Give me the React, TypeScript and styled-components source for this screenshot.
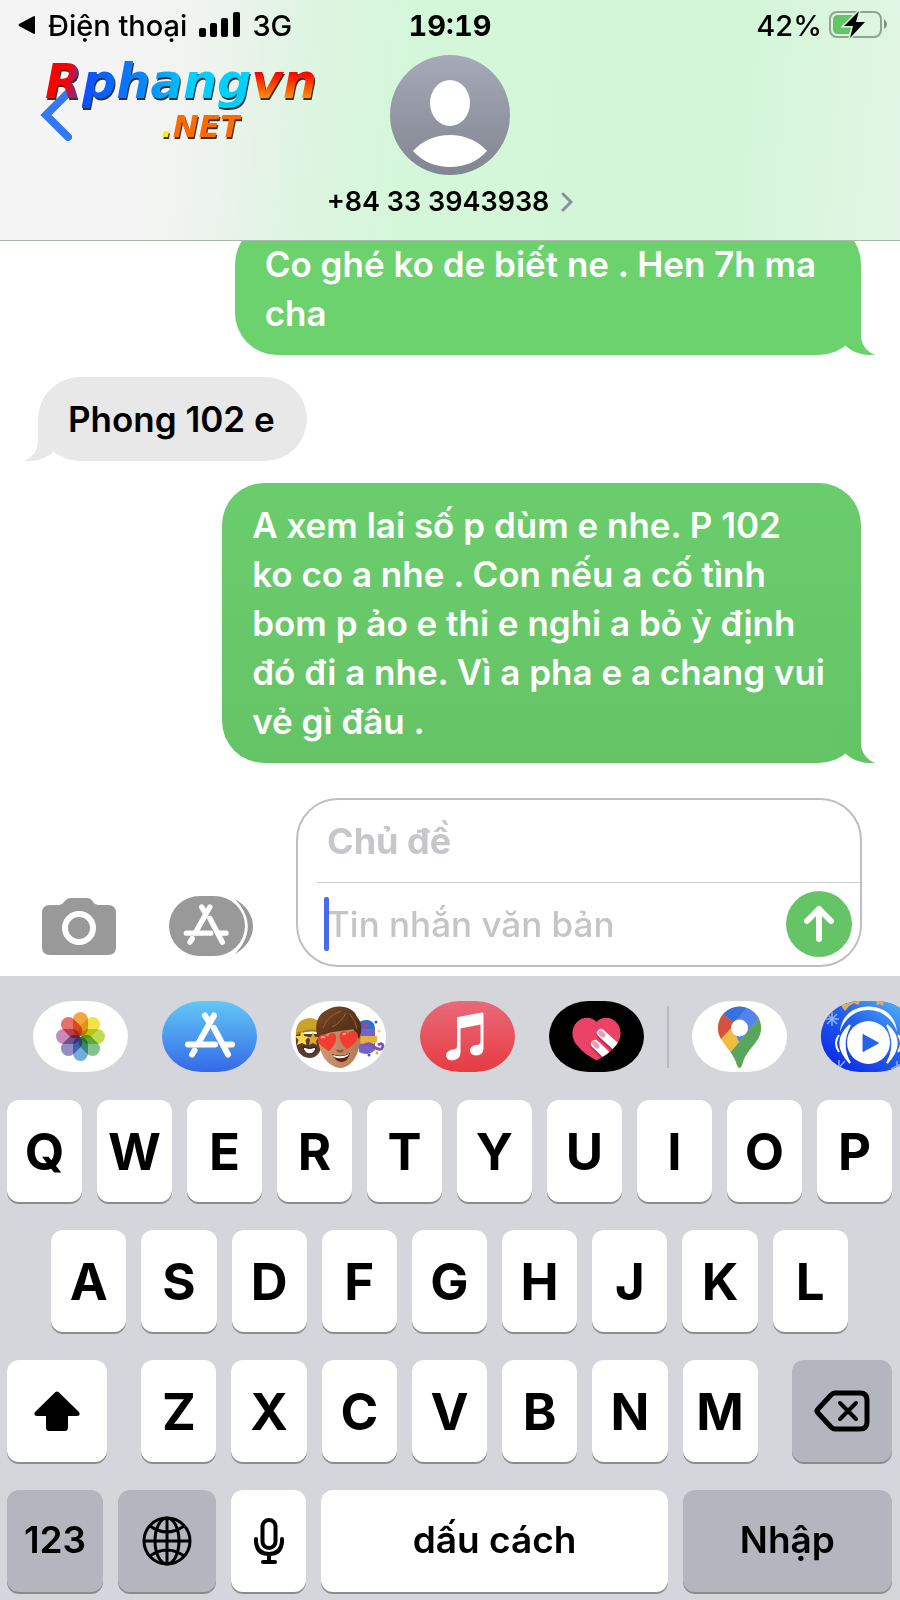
import React, { useState } from "react";
import styled, { createGlobalStyle } from "styled-components";

const MESSAGES = [
  { id: 1, mine: true, text: "Co ghé ko de biết ne . Hen 7h ma\u00a0\ncha" },
  { id: 2, mine: false, text: "Phong 102 e" },
  {
    id: 3,
    mine: true,
    text: "A xem lai số p dùm e nhe. P 102\nko co a nhe . Con nếu a cố tình\nbom p ảo e thi e nghi a bỏ ỳ định\nđó đi a nhe. Vì a pha e a chang vui\nvẻ gì đâu .",
  },
];

const PETALS = [
  "#f3a540",
  "#f0e447",
  "#bfdc55",
  "#82c48c",
  "#72addf",
  "#948cc4",
  "#c78abb",
  "#e7706c",
];

const SignalIcon = () => (
  <svg width="41" height="26" viewBox="0 0 41 26" aria-hidden="true">
    <rect x="0" y="16" width="7" height="9" rx="2" />
    <rect x="11" y="11" width="7" height="14" rx="2" />
    <rect x="22" y="6" width="7" height="19" rx="2" />
    <rect x="34" y="0" width="7" height="25" rx="2" />
  </svg>
);

const BatteryIcon = () => (
  <svg width="59" height="30" viewBox="0 0 59 30" aria-hidden="true">
    <rect x="1" y="2" width="51" height="25" rx="7" fill="none" stroke="#8fa592" strokeWidth="2" />
    <path d="M9 5H26L16 17H23L20 24H9Q4 24 4 19V10Q4 5 9 5Z" fill="#65c466" />
    <path d="M55 9Q58 12 58 14.500T55 19Z" fill="#7d917f" />
    <path
      d="M30 1L15 16H24L21 28L36 12H27Z"
      fill="#000"
      stroke="#d8f6dd"
      strokeWidth="3"
      paintOrder="stroke"
    />
  </svg>
);

const AvatarIcon = () => (
  <svg width="120" height="120" viewBox="0 0 120 120" aria-hidden="true">
    <defs>
      <linearGradient id="avatar" x1="0" y1="0" x2="0" y2="1">
        <stop offset="0" stopColor="#a6a9b7" />
        <stop offset="1" stopColor="#828690" />
      </linearGradient>
    </defs>
    <circle cx="60" cy="60" r="60" fill="url(#avatar)" />
    <ellipse cx="60" cy="48" rx="20" ry="23" fill="#fff" />
    <path d="M23 96C32 86 45 80 60 80S88 86 97 96C87 107 74 112 60 112S33 107 23 96Z" fill="#fff" />
  </svg>
);

const CameraIcon = () => (
  <svg width="76" height="60" viewBox="0 0 76 60" aria-hidden="true">
    <path
      d="M9 8H18Q21 8 23 5Q26 1 30 1H46Q50 1 52 5Q54 8 57 8H67Q75 8 75 16V50Q75 58 67 58H9Q1 58 1 50V16Q1 8 9 8Z"
      fill="#999"
    />
    <circle cx="38" cy="31" r="14" fill="none" stroke="#fff" strokeWidth="6" />
  </svg>
);

const StoreStrokes = () => (
  <g fill="none" stroke="#fff" strokeWidth="6" strokeLinecap="round" strokeLinejoin="round">
    <path d="M52 14.500L36 43M43 14.500L47 21" />
    <path d="M26 43.500H53M63 43.500H70" />
    <path d="M52 27L66 53.500M32.500 49.500L30 53.500" />
  </g>
);

const StoreButtonIcon = () => (
  <svg width="86" height="62" viewBox="0 0 86 62" aria-hidden="true">
    <path d="M32 1H46A31 30 0 0 1 46 61H32A31 30 0 0 1 32 1Z" fill="#999" />
    <path d="M67 4C91 18 91 45 67 59C84 41 84 22 67 4Z" fill="#999" />
    <g transform="translate(-5 -1) scale(.9)">
      <StoreStrokes />
    </g>
  </svg>
);

const PhotosIcon = () => (
  <svg viewBox="0 0 95 71" aria-hidden="true">
    {PETALS.map((color, idx) => (
      <rect
        key={color}
        x="40"
        y="11"
        width="15"
        height="24"
        rx="7.500"
        fill={color}
        transform={`rotate(${idx * 45} 47.500 35.500)`}
        style={{ mixBlendMode: "multiply" }}
      />
    ))}
  </svg>
);

const MemojiIcon = () => (
  <svg viewBox="0 0 95 71" aria-hidden="true">
    <defs>
      <linearGradient id="hair" x1="0" y1="0" x2="1" y2="1">
        <stop offset="0" stopColor="#7c4b28" />
        <stop offset="1" stopColor="#462511" />
      </linearGradient>
      <linearGradient id="skin" x1="0" y1="0" x2="1" y2="0">
        <stop offset="0" stopColor="#cf9a74" />
        <stop offset="1" stopColor="#b27a55" />
      </linearGradient>
    </defs>
    <path d="M5 33Q3 56 19 57Q32 56 32 33Z" fill="#5b3b29" />
    <path d="M5 34Q4 18 19 17Q31 18 32 30Q18 28 5 34Z" fill="#c9a227" />
    <path d="M6 33Q18 27 32 31" fill="none" stroke="#a37f16" strokeWidth="2" />
    <path d="M11 30L13.500 35L18 36L14.500 39L15.500 44L11 42L6 44L7.500 39L4 35L9 35Z" fill="#fbd64f" />
    <path d="M22 31L24 36L28 36L25 40L26 44L22 42L18 44L19 39L17 36L20 36Z" fill="#d9a832" />
    <path d="M12 46Q19 49 25 46Q24 53 18 53Q13 52 12 46Z" fill="#fff" stroke="#2d1712" />
    <path d="M68 21Q82 15 84 27V49Q77 56 68 51Z" fill="#7463c7" />
    <path d="M67 22Q76 16 83 23L83 28L67 27Z" fill="#2e6fd0" />
    <path d="M66 35H86V41L80 44L66 42Z" fill="#e6b13e" />
    <path d="M72 45Q78 40 83 46Q91 51 92 45Q91 41 87 44" fill="none" stroke="#7a55b8" strokeWidth="3" />
    <circle cx="75" cy="24" r="2" fill="#d53a57" />
    <circle cx="85" cy="21" r="1.500" fill="#3564d7" />
    <circle cx="88" cy="30" r="1.500" fill="#f2d54b" />
    <circle cx="78" cy="54" r="1.500" fill="#3564d7" />
    <circle cx="86" cy="52" r="1.500" fill="#e99a45" />
    <path d="M27 30C26 49 34 66 50 67C64 65 70 48 70 30L61 16H35Z" fill="url(#skin)" />
    <path
      d="M28 38C23 30 24 14 36 9C47 2 63 6 66 16C72 22 71 30 68 38C66 35 65 31 62 28C52 30 42 30 35 33C31 34 31 36 28 38Z"
      fill="url(#hair)"
    />
    <path
      d="M32 27Q36 15 50 10M41 26Q50 22 55 12M59 13Q65 20 66 28"
      fill="none"
      stroke="#9a6436"
      strokeWidth="1"
    />
    <path d="M38 50C29 45 26 41 27 37C29 32 35 33 37 36C38 31 44 31 45 35C46 40 43 45 38 50Z" fill="#f33b30" />
    <path d="M56 48C49 42 48 37 49 33C51 29 56 30 57 33C60 28 66 30 67 34C67 39 63 44 56 48Z" fill="#f33b30" />
    <path d="M30 37Q32 35 34 37M52 34Q53 32 55 33" fill="none" stroke="#ff9a90" strokeWidth="2" />
    <path d="M46 49Q49 52 52 49" fill="none" stroke="#8a5637" strokeWidth="2" />
    <path d="M41 53Q51 57 59 52Q57 61 50 61Q44 60 41 53Z" fill="#641f1d" />
    <path d="M42 54Q51 57 58 53L57 55Q50 59 43 56Z" fill="#fff" />
  </svg>
);

const MusicIcon = () => (
  <svg viewBox="0 0 95 71" aria-hidden="true">
    <path
      d="M37 17Q37 16 38 16L62 11.500Q63.500 11.500 63.500 13V48Q63 54 56 54.500Q50 54 50 49Q51 44 57 44Q60 44 60.500 41V23.500L40.500 27.500V52Q40 59 32 59.500Q26 59 26 54Q27 49 33 48.500Q37 48 37 45Z"
      fill="#fff"
    />
  </svg>
);

const HeartIcon = () => (
  <svg viewBox="0 0 95 71" aria-hidden="true">
    <defs>
      <clipPath id="heart">
        <path d="M47.500 21C53 15 62 16 67 21C73 27 73 36 68 43C62 51 54 56 47.500 59.500C41 56 33 51 27 43C22 36 22 27 28 21C33 16 42 15 47.500 21Z" />
      </clipPath>
    </defs>
    <g clipPath="url(#heart)">
      <rect width="95" height="71" fill="#eb4268" />
      <g fill="none" strokeLinecap="round">
        <path d="M52 34L74 55M46 45L66 64" stroke="#c22c52" strokeWidth="9" />
        <path d="M52 32L74 52M46 43L66 62" stroke="#fff" strokeWidth="8" />
        <path d="M51.500 32L54 34M45.500 42.500L48 45" stroke="#f09ab4" strokeWidth="5" />
      </g>
    </g>
  </svg>
);

const MapsIcon = () => (
  <svg viewBox="0 0 95 71" aria-hidden="true">
    <defs>
      <clipPath id="pin">
        <path d="M47.500 5.500A21.500 21.500 0 0 1 69 27C69 42 54 47 50 64Q49 67 47.500 67Q46 67 45 64C41 48 26 42 26 27A21.500 21.500 0 0 1 47.500 5.500Z" />
      </clipPath>
    </defs>
    <g clipPath="url(#pin)">
      <rect width="95" height="71" fill="#f0bd42" />
      <path d="M15 0L31 13L43 23L27 40L15 45Z" fill="#d75140" />
      <path d="M20 3L31 13L43 23L60 2V0H20Z" fill="#3871e0" />
      <path d="M58 2L40 24L47 41L67 17L75 0Z" fill="#5383ec" />
      <path d="M67 17L38 52V71H75V7Z" fill="#58a55c" />
    </g>
    <circle cx="47.500" cy="27" r="8.500" fill="#fff" />
  </svg>
);

const HeadphonesIcon = () => (
  <svg viewBox="0 0 95 71" aria-hidden="true">
    <defs>
      <linearGradient id="radio" x1="0" y1="1" x2="1" y2="0">
        <stop offset="0.150" stopColor="#1030e6" />
        <stop offset="0.550" stopColor="#2563ee" />
        <stop offset="0.850" stopColor="#4aa4f8" />
      </linearGradient>
    </defs>
    <rect width="95" height="71" fill="url(#radio)" />
    <path d="M19 3L27 2L40 -1L37 4L33 2L28 5L24 10ZM55 0H63L62 5L59 3L56 4Z" fill="#e6ab62" />
    <g stroke="#86b4fb" strokeWidth="1.500">
      <path d="M11 11V25M4 18H18M6 13L16 23M16 13L6 23" />
      <path d="M18 59V71M11 64L24 71M24 60L14 71M76 60V71M70 68L82 62" />
    </g>
    <path d="M19 31C20 15 32 5.500 47.500 5.500S75 15 76 31C72 18 61 9 47.500 9S23 18 19 31Z" fill="#fff" />
    <path
      d="M29 24C16 36 16 48 29 62C22 50 22 37 29 24ZM66 24C79 36 79 48 66 62C73 50 73 37 66 24Z"
      fill="#fff"
      stroke="#fff"
      strokeWidth="2"
    />
    <path d="M18 34Q12 42 18 51M77 34Q83 42 77 51" fill="none" stroke="#fff" strokeWidth="2" />
    <circle cx="47.500" cy="41.500" r="21.500" fill="#fff" />
    <path d="M42 33.500V50.500L57.500 42Z" fill="#2563ee" stroke="#2563ee" strokeLinejoin="round" />
  </svg>
);

const GlobeIcon = () => (
  <svg width="50" height="50" viewBox="0 0 50 50" fill="none" stroke="#000" strokeWidth="3" aria-hidden="true">
    <circle cx="25" cy="25" r="23" />
    <ellipse cx="25" cy="25" rx="12" ry="23" />
    <path d="M25 2V48M2 25H48M8 10Q25 22 42 10M8 40Q25 28 42 40" />
  </svg>
);

const MicIcon = () => (
  <svg
    width="30"
    height="48"
    viewBox="0 0 30 48"
    fill="none"
    stroke="#000"
    strokeWidth="4"
    strokeLinecap="round"
    aria-hidden="true"
  >
    <rect x="8.500" y="3" width="13" height="28" rx="6.500" />
    <path d="M2 22V25Q3 37 15 37T28 25V22M15 37V45M9 45H21" />
  </svg>
);

const DeleteIcon = () => (
  <svg
    width="56"
    height="42"
    viewBox="0 0 56 42"
    fill="none"
    stroke="#000"
    strokeWidth="4"
    strokeLinecap="round"
    strokeLinejoin="round"
    aria-hidden="true"
  >
    <path
      d="M21 3H46Q53 3 53 10V32Q53 39 46 39H21Q19 39 17 37L4 23Q2 21 4 19L17 5Q19 3 21 3Z"
      strokeWidth="5"
    />
    <path d="M26 13L42 29M42 13L26 29" />
  </svg>
);

const ShiftIcon = () => (
  <svg width="46" height="40" viewBox="0 0 46 40" aria-hidden="true">
    <path d="M21.500 1Q23 0 24.500 1L45 21Q47 25 43 25H34V36Q34 40 31 40H15Q12 40 12 36V25H3Q-1 25 1 21Z" />
  </svg>
);

const APPS = [
  { name: "Ảnh", bg: "#fff", icon: <PhotosIcon /> },
  {
    name: "App Store",
    bg: "linear-gradient(#62c8f5, #3669e8)",
    icon: (
      <svg viewBox="0 0 95 71" aria-hidden="true">
        <StoreStrokes />
      </svg>
    ),
  },
  { name: "Memoji", bg: "#fff", icon: <MemojiIcon /> },
  { name: "Nhạc", bg: "linear-gradient(#e96a79, #e63b42)", icon: <MusicIcon /> },
  { name: "Digital Touch", bg: "#000", icon: <HeartIcon /> },
];

const MORE_APPS = [
  { name: "Bản đồ", bg: "#fff", icon: <MapsIcon /> },
  { name: "Radio", bg: "#2563ee", icon: <HeadphonesIcon /> },
];

const App = () => {
  const [subject, setSubject] = useState("");
  const [message, setMessage] = useState("");

  // gõ phím chữ thì thêm vào tin nhắn
  const onClickKey = (letter: string) => {
    setMessage(message + letter);
  };

  return (
    <SPage>
      <GlobalStyle />
      <SHeader>
        <SStatusBar>
          <SStatusLeft>
            <svg width="18" height="18" viewBox="0 0 18 18" aria-hidden="true">
              <path d="M17 1V17Q17 18 16 18L1 10Q0 9 1 8L16 0Q17 0 17 1Z" />
            </svg>
            <span>Điện thoại</span>
            <SignalIcon />
            <span>3G</span>
          </SStatusLeft>
          <STime>19:19</STime>
          <SStatusRight>
            <span>42%</span>
            <BatteryIcon />
          </SStatusRight>
        </SStatusBar>
        <SNav>
          <SNavLeft>
            <SBackButton aria-label="Quay lại">
              <svg width="32" height="54" viewBox="0 0 32 54" aria-hidden="true">
                <path
                  d="M28 4L6 26L28 48"
                  fill="none"
                  stroke="#3478f6"
                  strokeWidth="8"
                  strokeLinecap="round"
                />
              </svg>
            </SBackButton>
            <SLogo>
              <div>
                <SLogoPart $fill="linear-gradient(100deg, #f00 55%, #4a3cc0 90%)">R</SLogoPart>
                <SLogoPart $fill="linear-gradient(90deg, #0a4dff, #0a84ff 35%, #00d0ff 65%)">phang</SLogoPart>
                <SLogoPart $fill="linear-gradient(#f00 35%, #ff9000 80%)">vn</SLogoPart>
              </div>
              <SLogoDomain>
                <SLogoPart $fill="#ffee00">.</SLogoPart>
                <SLogoPart $fill="#ff6a00">NET</SLogoPart>
              </SLogoDomain>
            </SLogo>
          </SNavLeft>
          <SContact>
            <AvatarIcon />
            <SContactName>
              +84 33 3943938
              <svg width="12" height="20" viewBox="0 0 12 20" aria-hidden="true">
                <path d="M2 2L10 10L2 18" fill="none" stroke="#8a8f99" strokeWidth="3" strokeLinecap="round" />
              </svg>
            </SContactName>
          </SContact>
        </SNav>
      </SHeader>

      <SMessages>
        {MESSAGES.map((item) => (
          <SBubble key={item.id} $mine={item.mine}>
            {item.text}
            <STail $mine={item.mine} viewBox="0 0 60 60" aria-hidden="true">
              <path d="M20 20L46 15V40C46 51 53 57 60 60C48 61 37 57 31 51L20 40Z" />
            </STail>
          </SBubble>
        ))}
      </SMessages>

      <SCompose>
        <SIconButton aria-label="Máy ảnh">
          <CameraIcon />
        </SIconButton>
        <SIconButton aria-label="Ứng dụng">
          <StoreButtonIcon />
        </SIconButton>
        <SField>
          <SSubject
            aria-label="Chủ đề"
            placeholder="Chủ đề"
            value={subject}
            onChange={(e) => setSubject(e.target.value)}
          />
          <SMessageRow>
            {message === "" && <SCaret />}
            <SInput
              aria-label="Tin nhắn văn bản"
              placeholder="Tin nhắn văn bản"
              value={message}
              onChange={(e) => setMessage(e.target.value)}
            />
            <SSendButton aria-label="Gửi">
              <svg width="30" height="38" viewBox="0 0 30 38" aria-hidden="true">
                <path
                  d="M15 34V4M3 16L15 4L27 16"
                  fill="none"
                  stroke="#fff"
                  strokeWidth="6"
                  strokeLinecap="round"
                  strokeLinejoin="round"
                />
              </svg>
            </SSendButton>
          </SMessageRow>
        </SField>
      </SCompose>

      <SKeyboard>
        <SAppStrip>
          {APPS.map((app) => (
            <SAppButton key={app.name} aria-label={app.name} $bg={app.bg}>
              {app.icon}
            </SAppButton>
          ))}
          <SStripLine />
          {MORE_APPS.map((app) => (
            <SAppButton key={app.name} aria-label={app.name} $bg={app.bg}>
              {app.icon}
            </SAppButton>
          ))}
        </SAppStrip>
        <SKeys>
          <SKeyRow $cols="repeat(10, 1fr)">
            {[..."QWERTYUIOP"].map((letter) => (
              <SKey key={letter} onClick={() => onClickKey(letter)}>
                {letter}
              </SKey>
            ))}
          </SKeyRow>
          <SKeyRow $cols="repeat(9, 1fr)" $inset="5%">
            {[..."ASDFGHJKL"].map((letter) => (
              <SKey key={letter} onClick={() => onClickKey(letter)}>
                {letter}
              </SKey>
            ))}
          </SKeyRow>
          <SKeyRow $cols="100fr 4fr repeat(7, 75fr) 4fr 100fr">
            <SKey aria-label="Shift">
              <ShiftIcon />
            </SKey>
            <span />
            {[..."ZXCVBNM"].map((letter) => (
              <SKey key={letter} onClick={() => onClickKey(letter)}>
                {letter}
              </SKey>
            ))}
            <span />
            <SKey $dark aria-label="Xóa" onClick={() => setMessage(message.slice(0, -1))}>
              <DeleteIcon />
            </SKey>
          </SKeyRow>
          <SKeyRow $cols="96fr 98fr 75fr 346fr 209fr">
            <SKey $dark $small>
              123
            </SKey>
            <SKey $dark aria-label="Ngôn ngữ">
              <GlobeIcon />
            </SKey>
            <SKey aria-label="Đọc chính tả">
              <MicIcon />
            </SKey>
            <SKey $small onClick={() => onClickKey(" ")}>
              dấu cách
            </SKey>
            <SKey $dark $small>
              Nhập
            </SKey>
          </SKeyRow>
        </SKeys>
      </SKeyboard>
    </SPage>
  );
};

export default App;

const GlobalStyle = createGlobalStyle`
  * {
    box-sizing: border-box;
  }
  body {
    margin: 0;
    background: #fff;
    color: #000;
    font-family: Inter, "Liberation Sans", sans-serif;
  }
  button, input {
    margin: 0;
    padding: 0;
    border: none;
    background: none;
    color: inherit;
    font-family: inherit;
  }
  button {
    cursor: pointer;
  }
  input {
    outline: none;
  }
  svg {
    display: block;
    flex-shrink: 0;
  }
`;

const SPage = styled.div`
  display: flex;
  flex-direction: column;
  height: 100vh;
  overflow: hidden;
`;

const SHeader = styled.header`
  flex-shrink: 0;
  border-bottom: 1px solid #a9b8ab;
  background: linear-gradient(
    95deg,
    #f4f4f4 14%,
    #eff3ef 23%,
    #def4e1 34%,
    #d4f7da 45%,
    #d3f6d9 82%,
    #e2f5e4
  );
`;

const SStatusBar = styled.div`
  display: grid;
  grid-template-columns: 1fr auto 1fr;
  align-items: center;
  height: 50px;
  padding: 0 12px;
  font-size: 29px;
  font-weight: 500;
`;

const SStatusLeft = styled.div`
  display: flex;
  align-items: center;
  gap: 12px;
  padding-left: 6px;
`;

const STime = styled.time`
  font-weight: 700;
  font-variant-numeric: tabular-nums;
`;

const SStatusRight = styled.div`
  display: flex;
  align-items: center;
  justify-content: flex-end;
  gap: 7px;
`;

const SNav = styled.div`
  display: grid;
  grid-template-columns: 1fr auto 1fr;
  padding: 5px 0 22px;
`;

const SNavLeft = styled.div`
  position: relative;
  padding: 34px 0 0 40px;
`;

const SBackButton = styled.button`
  display: block;
`;

const SLogo = styled.div`
  position: absolute;
  top: -3px;
  left: 45px;
  font-family: "DejaVu Sans", Inter, sans-serif;
  font-size: 48px;
  font-style: italic;
  font-weight: 700;
  line-height: 58px;
  white-space: nowrap;
  filter: drop-shadow(1px 2px 0 #333);
`;

const SLogoPart = styled.span<{ $fill: string }>`
  background: ${({ $fill }) => $fill};
  background-clip: text;
  -webkit-background-clip: text;
  color: transparent;
`;

const SLogoDomain = styled.div`
  padding-left: 116px;
  font-size: 31px;
  line-height: 32px;
`;

const SContact = styled.button`
  display: flex;
  flex-direction: column;
  align-items: center;
  gap: 11px;
`;

const SContactName = styled.span`
  display: flex;
  align-items: center;
  gap: 12px;
  font-size: 27px;
  font-weight: 600;
  line-height: 32px;
`;

const SMessages = styled.main`
  display: flex;
  flex: 1;
  flex-direction: column;
  justify-content: flex-end;
  gap: 22px;
  min-height: 0;
  padding: 0 39px 35px 38px;
  overflow: hidden;
`;

const SBubble = styled.p<{ $mine: boolean }>`
  position: relative;
  flex-shrink: 0;
  align-self: ${({ $mine }) => ($mine ? "flex-end" : "flex-start")};
  max-width: 80%;
  margin: 0;
  padding: 18px ${({ $mine }) => ($mine ? "36px" : "32px")} 17px 30px;
  border-radius: 42px;
  background: ${({ $mine }) => ($mine ? "linear-gradient(#6acd6c, #65c466)" : "#e8e8e8")};
  color: ${({ $mine }) => ($mine ? "#fff" : "#000")};
  fill: ${({ $mine }) => ($mine ? "#65c466" : "#e8e8e8")};
  font-size: 35px;
  font-weight: 600;
  line-height: 49px;
  white-space: pre-line;

  &:first-child {
    background: #6cd26e;
    fill: #6cd26e;
  }
`;

const STail = styled.svg<{ $mine: boolean }>`
  position: absolute;
  bottom: 0;
  ${({ $mine }) => ($mine ? "right: -14px;" : "left: -14px; transform: scaleX(-1);")}
  width: 60px;
  height: 60px;
`;

const SCompose = styled.form.attrs({ onSubmit: (e: React.FormEvent) => e.preventDefault() })`
  display: flex;
  flex-shrink: 0;
  align-items: flex-end;
  padding: 0 38px 9px 41px;
`;

const SIconButton = styled.button.attrs({ type: "button" })`
  margin: 0 51px 10px 0;

  & + & {
    margin-right: 42px;
  }
`;

const SField = styled.div`
  flex: 1;
  min-width: 0;
  border: 2px solid #bfbfc1;
  border-radius: 42px;
`;

const SSubject = styled.input`
  display: block;
  width: calc(100% - 19px);
  height: 83px;
  margin-left: 19px;
  padding-left: 10px;
  border-bottom: 1px solid #d0d0d2;
  font-size: 36px;
  font-weight: 700;

  &::placeholder {
    color: #c6c6cb;
    opacity: 1;
  }
`;

const SMessageRow = styled.div`
  position: relative;
  display: flex;
  align-items: center;
  height: 82px;
  padding: 0 8px 0 29px;
`;

const SCaret = styled.span`
  position: absolute;
  top: 14px;
  left: 26px;
  width: 5px;
  height: 54px;
  border-radius: 2px;
  background: #4a6cec;
`;

const SInput = styled.input`
  flex: 1;
  min-width: 0;
  height: 60px;
  font-size: 35px;
  font-weight: 500;

  &::placeholder {
    color: #c5c5c7;
    opacity: 1;
  }
`;

const SSendButton = styled.button`
  display: flex;
  align-items: center;
  justify-content: center;
  width: 66px;
  height: 66px;
  border-radius: 50%;
  background: #65c466;
`;

const SKeyboard = styled.section`
  flex-shrink: 0;
  background: #d5d6db;
`;

const SAppStrip = styled.div`
  display: flex;
  align-items: center;
  gap: 34px;
  padding: 25px 0 28px 33px;
  overflow: hidden;
`;

const SAppButton = styled.button<{ $bg: string }>`
  flex-shrink: 0;
  width: 95px;
  height: 71px;
  border-radius: 40px / 36px;
  background: ${({ $bg }) => $bg};
  overflow: hidden;
`;

const SStripLine = styled.span`
  flex-shrink: 0;
  width: 2px;
  height: 62px;
  margin: 0 -11px;
  background: #b9babf;
`;

const SKeys = styled.div`
  display: grid;
  gap: 28px;
  padding: 0 8px 8px 7px;
`;

const SKeyRow = styled.div<{ $cols: string; $inset?: string }>`
  display: grid;
  grid-template-columns: ${({ $cols }) => $cols};
  gap: 15px;
  padding: 0 ${({ $inset }) => $inset || "0"};
`;

const SKey = styled.button<{ $dark?: boolean; $small?: boolean }>`
  display: flex;
  align-items: center;
  justify-content: center;
  min-width: 0;
  height: 102px;
  padding-bottom: ${({ $small }) => ($small ? "4px" : "0")};
  border-radius: 12px;
  background: ${({ $dark }) => ($dark ? "#b3b6bf" : "#fff")};
  box-shadow: 0 2px 0 #8b8c90;
  font-size: ${({ $small }) => ($small ? "37px" : "51px")};
  font-weight: ${({ $small }) => ($small ? 600 : 700)};
  white-space: nowrap;
`;
